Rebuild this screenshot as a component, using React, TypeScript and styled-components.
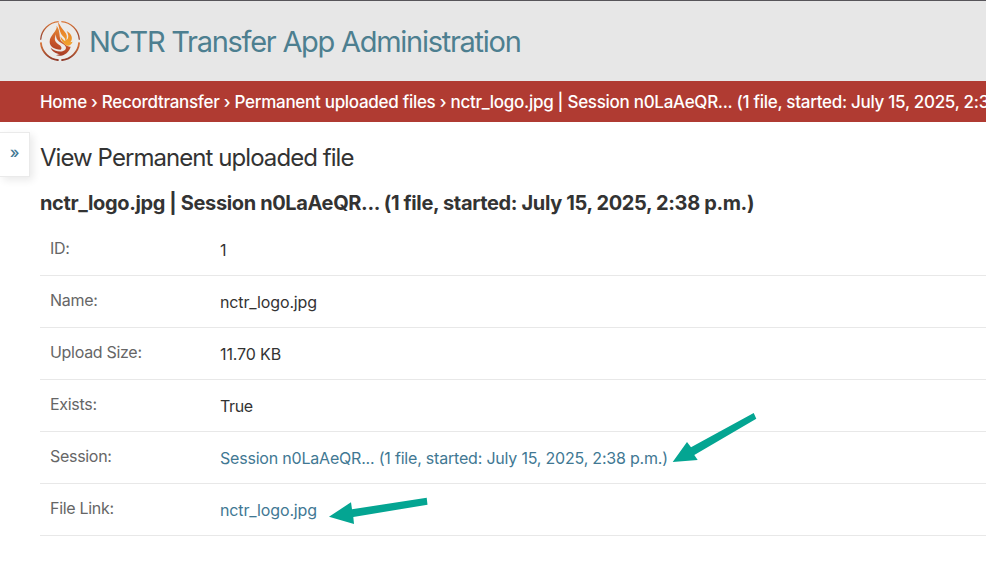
import React from "react";
import styled, { createGlobalStyle } from "styled-components";

const GlobalStyle = createGlobalStyle`
  * { box-sizing: border-box; }
  html, body { margin: 0; padding: 0; }
  body {
    background: #fff;
    color: #333;
    font-family: Inter, Roboto, sans-serif;
    font-size: 16px;
    overflow: hidden;
  }
`;

const Page = styled.div`
  position: relative;
  width: 100%;
  height: 578px;
  overflow: hidden;
`;

const Header = styled.header`
  display: flex;
  align-items: center;
  gap: 9px;
  height: 81px;
  padding: 0 40px;
  border-top: 1px solid #57555a;
  background: #e7e7e7;
`;

const Logo = styled.svg`
  display: block;
  flex: none;
  width: 40px;
  height: 40px;
`;

const SiteName = styled.h1`
  margin: 2px 0 0;
  color: #4d7f90;
  font-size: 29px;
  font-weight: 400;
  line-height: 36px;
  letter-spacing: -1.27px;
  white-space: nowrap;
`;

const Breadcrumbs = styled.nav`
  height: 41px;
  padding: 0 0 0 40px;
  background: #b03b32;
  color: #fff;
  font-size: 17px;
  font-weight: 500;
  line-height: 42px;
  letter-spacing: -0.29px;
  white-space: nowrap;
  overflow: hidden;
`;

const Main = styled.div`
  display: flex;
  align-items: flex-start;
`;

const SidebarToggle = styled.button`
  flex: none;
  width: 30px;
  height: 45px;
  margin: 10px 10px 0 0;
  padding: 0 0 4px;
  border: 1px solid #eaeaea;
  border-left: 0;
  background: #fff;
  box-shadow: 3px 3px 8px rgba(0, 0, 0, 0.09);
  color: #417893;
  font-family: inherit;
  font-size: 16px;
  font-weight: 500;
  line-height: 39px;
`;

const Content = styled.main`
  flex: 1;
  min-width: 0;
`;

const PageTitle = styled.h2`
  margin: 20px 0 0;
  font-size: 24px;
  font-weight: 400;
  line-height: 32px;
  letter-spacing: -0.94px;
`;

const ObjectTitle = styled.h3`
  margin: 17px 0 0;
  font-size: 20px;
  font-weight: 700;
  line-height: 24px;
  letter-spacing: -0.37px;
  white-space: nowrap;
`;

const Row = styled.div`
  display: flex;
  height: 52px;
  padding-left: 10px;
  border-bottom: 1px solid #e8e8e8;
  line-height: 20px;
`;

const Fields = styled.div`
  margin-top: 9px;
`;

const Label = styled.div`
  width: 170px;
  padding-top: 14px;
  color: #666;
  letter-spacing: -0.3px;
`;

const Value = styled.div<{ $tracking: number }>`
  padding-top: 16px;
  letter-spacing: ${(p) => p.$tracking}px;
  white-space: nowrap;
`;

const Link = styled.a`
  color: #417893;
  text-decoration: none;
`;

const Arrows = styled.svg`
  position: absolute;
  left: 0;
  top: 0;
  pointer-events: none;
`;

const SESSION = "Session n0LaAeQR... (1 file, started: July 15, 2025, 2:38 p.m.)";

const fields = [
  { label: "ID:", value: "1", tracking: -0.2 },
  { label: "Name:", value: "nctr_logo.jpg", tracking: -0.13 },
  { label: "Upload Size:", value: "11.70 KB", tracking: -0.12 },
  { label: "Exists:", value: "True", tracking: -0.35 },
  { label: "Session:", value: SESSION, link: true, tracking: -0.2 },
  { label: "File Link:", value: "nctr_logo.jpg", link: true, tracking: -0.13 },
];

function FlameLogo() {
  return (
    <Logo viewBox="30 32 120 120" aria-hidden="true">
      <defs>
        <linearGradient id="ring" x1="0" y1="0" x2="0" y2="1">
          <stop offset="0" stopColor="#db793b" />
          <stop offset="1" stopColor="#8f3a2a" />
        </linearGradient>
        <linearGradient id="flame" x1="0.2" y1="0" x2="0" y2="1">
          <stop offset="0" stopColor="#e58a35" />
          <stop offset="0.5" stopColor="#c8562a" />
          <stop offset="1" stopColor="#9c3524" />
        </linearGradient>
        <linearGradient id="wing" x1="0" y1="0" x2="0" y2="1">
          <stop offset="0" stopColor="#e0702a" />
          <stop offset="1" stopColor="#f3a52c" />
        </linearGradient>
      </defs>
      <circle cx="90" cy="92" r="60" fill="#ecebe9" />
      <g fill="none" stroke="url(#ring)">
        <path d="M32 88A58 58 0 0 1 86 34M94 34A58 58 0 0 1 148 88" strokeWidth="3.5" />
        <path d="M32.5 96A57.5 57.5 0 0 0 86 149.5M94 149.5A57.5 57.5 0 0 0 147.5 96" strokeWidth="5.5" />
      </g>
      <path fill="url(#flame)" d="M80 46C83 62 59 74 59 94C59 108 72 117 92 118C98 112 92 106 84 101C74 94 72 86 78 72C77 85 84 93 94 98C108 105 112 113 104 120C92 128 72 122 62 112C67 124 78 130 90 131L78 135C98 141 118 127 122 109C113 111 106 103 98 96C88 88 90 78 88 68C87 60 86 54 80 46Z" />
      <path fill="url(#wing)" d="M84 35C86 50 89 60 93 70C98 80 107 80 106 93C99 87 95 84 91 78C92 90 99 97 106 103C113 109 123 106 128 94L121 96C130 86 126 71 110 62C118 77 115 86 109 89C113 77 109 70 103 63C95 54 91 46 84 35Z" />
    </Logo>
  );
}

export default function App() {
  return (
    <Page>
      <GlobalStyle />
      <Header>
        <FlameLogo />
        <SiteName>NCTR Transfer App Administration</SiteName>
      </Header>
      <Breadcrumbs>
        Home › Recordtransfer › Permanent uploaded files › nctr_logo.jpg | {SESSION}
      </Breadcrumbs>
      <Main>
        <SidebarToggle aria-label="Toggle navigation">»</SidebarToggle>
        <Content>
          <PageTitle>View Permanent uploaded file</PageTitle>
          <ObjectTitle>nctr_logo.jpg | {SESSION}</ObjectTitle>
          <Fields>
            {fields.map((f) => (
              <Row key={f.label}>
                <Label>{f.label}</Label>
                <Value $tracking={f.tracking}>{f.link ? <Link>{f.value}</Link> : f.value}</Value>
              </Row>
            ))}
          </Fields>
        </Content>
      </Main>
      <Arrows width="986" height="578" fill="#04a592" aria-hidden="true">
        <path d="M672.7 462L687 442L691 447.3L753.7 413L756.3 418.7L694.3 455L697.7 460Z" />
        <path d="M329 516.7L351 502.3L352 509.3L426.7 497.7L427.5 504.7L353.3 517L354 524Z" />
      </Arrows>
    </Page>
  );
}
